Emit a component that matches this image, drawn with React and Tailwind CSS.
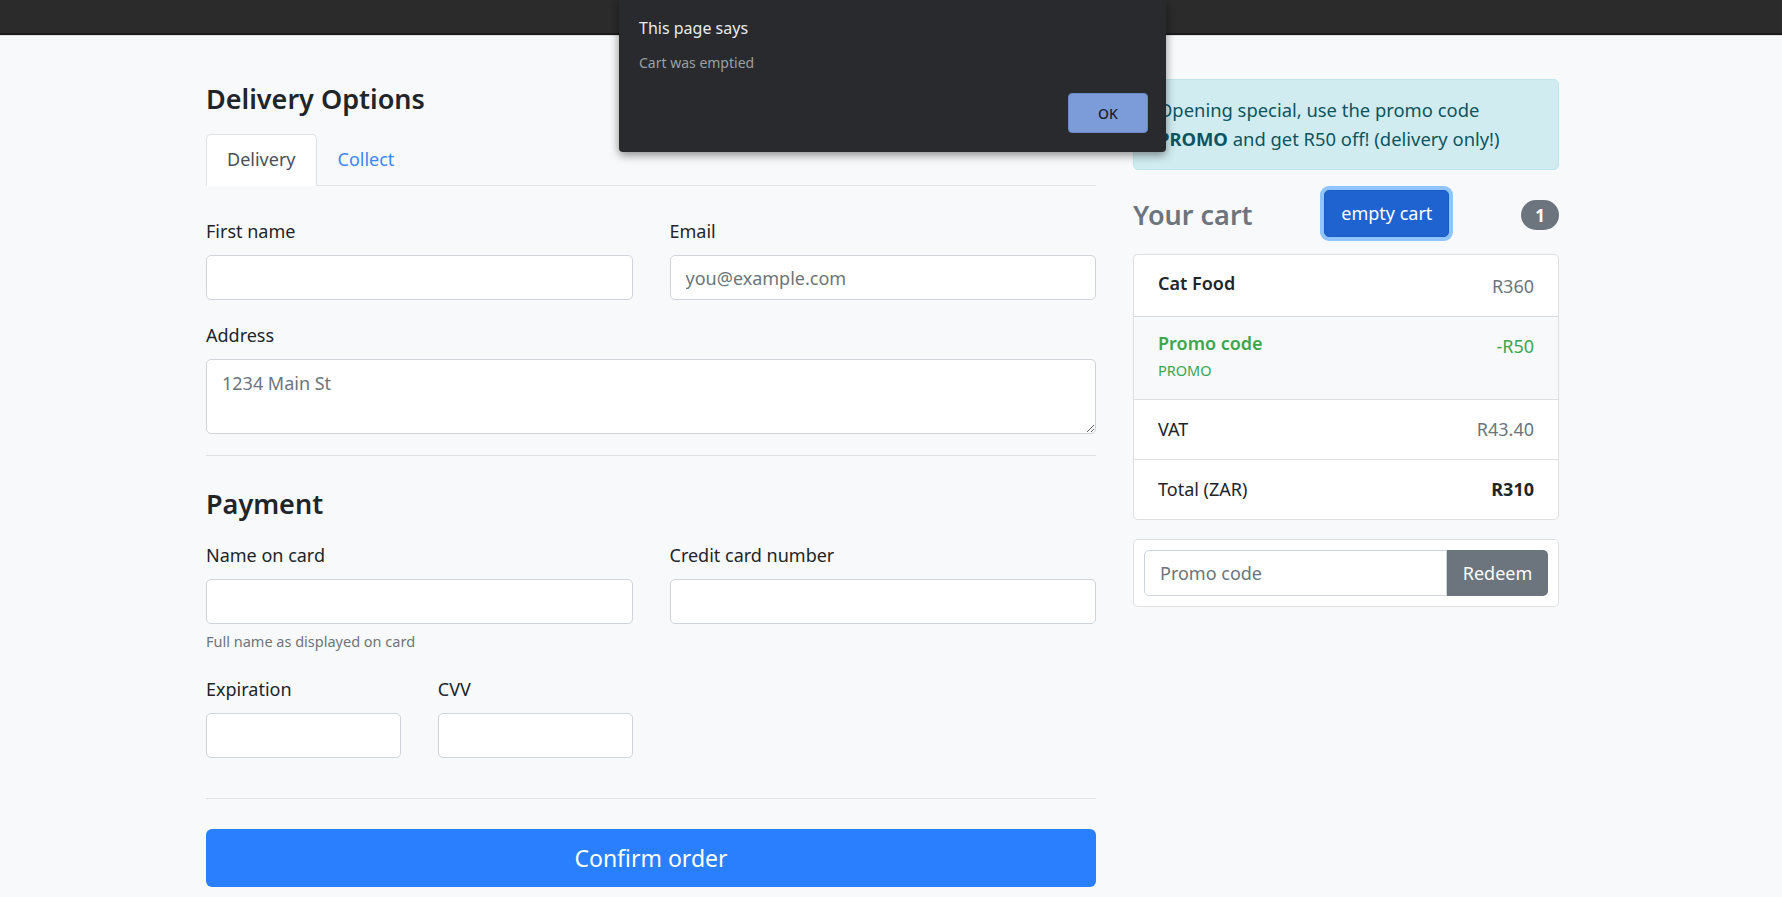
const inputClass =
  "h-[45px] w-full rounded-[5px] border border-[#ced4da] bg-white px-[15px] text-[18px] text-[#495057] outline-none placeholder:text-[#6c757d]";

function Field({ label, placeholder, help }) {
  return (
    <div>
      <label className="mb-[9px] block leading-[29px]">{label}</label>
      <input className={inputClass} placeholder={placeholder} />
      {help && (
        <div className="mt-[6px] text-[14.5px] leading-[23px] text-[#6c757d]">{help}</div>
      )}
    </div>
  );
}

function CartRow({ children, className = "" }) {
  return (
    <div className={`flex justify-between px-[24px] ${className}`}>{children}</div>
  );
}

function AlertDialog() {
  return (
    <div className="absolute left-[619px] top-0 flex h-[152px] w-[547px] flex-col rounded-b-[4px] bg-[#292a2d] pb-[19px] pl-[20px] pr-[18px] pt-[17px] shadow-[0_3px_10px_rgba(0,0,0,0.45)]">
      <div className="text-[16px] leading-[22px] text-[#e8eaed]">This page says</div>
      <div className="mt-[14px] text-[14px] leading-[20px] text-[#9aa0a6]">Cart was emptied</div>
      <div className="mt-auto flex justify-end">
        <button
          type="button"
          className="h-[40px] w-[80px] rounded-[4px] border border-[#6a89c6] bg-[#7b9cd9] text-[14px] font-medium text-[#202124]"
        >
          OK
        </button>
      </div>
    </div>
  );
}

export default function App() {
  return (
    <div className="relative min-h-[897px] bg-[#f8f9fa] font-['Noto_Sans',sans-serif] text-[18px] leading-[29px] text-[#212529]">
      <div className="h-[35px] border-b-2 border-[#1c1c1c] bg-[#2b2b2b]" />
      <div className="h-px bg-[#dadce0]" />

      <div className="flex gap-[37px] pl-[206px]">
        {/* checkout form */}
        <div className="w-[890px] pt-[45px]">
          <h4 className="text-[27px] font-semibold leading-[35px]">Delivery Options</h4>

          <div className="mt-[18px] flex border-b border-[#dee2e6]">
            <div className="-mb-px rounded-t-[5px] border border-[#dee2e6] border-b-transparent bg-white px-[20px] py-[10px] text-[#495057]">
              Delivery
            </div>
            <div className="border border-transparent px-[20px] py-[10px] text-[#3d85f5]">Collect</div>
          </div>

          <div className="mt-[31px] grid grid-cols-2 gap-x-[37px]">
            <Field label="First name" />
            <Field label="Email" placeholder="you@example.com" />
          </div>

          <div className="mt-[21px]">
            <label className="mb-[9px] block">Address</label>
            <textarea
              className="block h-[75px] w-full rounded-[5px] border border-[#ced4da] bg-white px-[15px] py-[9px] text-[18px] leading-[29px] text-[#495057] outline-none placeholder:text-[#6c757d]"
              placeholder="1234 Main St"
            />
          </div>

          <hr className="mt-[21px] border-t border-[#dfe0e1]" />

          <h4 className="mt-[30px] text-[27px] font-semibold leading-[35px]">Payment</h4>

          <div className="mt-[20px] grid grid-cols-2 gap-x-[37px]">
            <Field label="Name on card" help="Full name as displayed on card" />
            <Field label="Credit card number" />
          </div>

          <div className="mt-[22px] grid grid-cols-4 gap-x-[37px]">
            <Field label="Expiration" />
            <Field label="CVV" />
          </div>

          <hr className="mt-[40px] border-t border-[#dfe0e1]" />

          <button
            type="button"
            className="mt-[30px] h-[58px] w-full rounded-[6px] bg-[#2a7fff] text-[23px] text-white"
          >
            Confirm order
          </button>
        </div>

        {/* cart */}
        <div className="w-[426px] pt-[43px]">
          <div className="rounded-[5px] border border-[#bee5eb] bg-[#d1ecf1] px-[24px] pb-[16px] pt-[15px] text-[18.4px] text-[#0c5460]">
            Opening special, use the promo code
            <br />
            <strong className="font-bold">PROMO</strong> and get R50 off! (delivery only!)
          </div>

          <div className="mt-[20px] flex h-[47px] items-center justify-between">
            <h4 className="mt-[2px] text-[27px] font-semibold leading-[35px] text-[#6c757d]">Your cart</h4>
            <button
              type="button"
              className="h-[47px] w-[125px] rounded-[5px] border border-[#1a5bc4] bg-[#1f63d0] text-[18px] text-white shadow-[0_0_0_4px_rgba(38,143,255,0.5)]"
            >
              empty cart
            </button>
            <span className="mt-[3px] flex h-[30px] w-[38px] items-center justify-center rounded-full bg-[#6c757d] text-[17px] font-bold text-white">
              1
            </span>
          </div>

          <div className="mt-[17px] rounded-[5px] border border-black/[0.125] bg-white">
            <CartRow className="pb-[15px] pt-[17px]">
              <h6 className="text-[18px] font-semibold leading-[23px]">Cat Food</h6>
              <span className="text-[#6c757d]">R360</span>
            </CartRow>
            <CartRow className="border-t border-black/[0.125] bg-[#f8f9fa] pb-[16px] pt-[15px] text-[#3da64d]">
              <div>
                <h6 className="text-[18px] font-semibold leading-[23px]">Promo code</h6>
                <small className="mt-[3px] block text-[14.5px] leading-[25px]">PROMO</small>
              </div>
              <span>-R50</span>
            </CartRow>
            <CartRow className="border-t border-black/[0.125] py-[15px]">
              <span>VAT</span>
              <span className="text-[#6c757d]">R43.40</span>
            </CartRow>
            <CartRow className="border-t border-black/[0.125] py-[15px]">
              <span>Total (ZAR)</span>
              <strong className="font-bold">R310</strong>
            </CartRow>
          </div>

          <div className="mt-[19px] flex rounded-[5px] border border-black/[0.125] bg-white p-[10px]">
            <input
              className="h-[46px] min-w-0 flex-1 rounded-l-[5px] border border-[#ced4da] bg-white px-[15px] text-[18px] outline-none placeholder:text-[#6c757d]"
              placeholder="Promo code"
            />
            <button
              type="button"
              className="h-[46px] w-[101px] rounded-r-[5px] bg-[#6c757d] text-[18px] text-white"
            >
              Redeem
            </button>
          </div>
        </div>
      </div>

      <AlertDialog />
    </div>
  );
}
